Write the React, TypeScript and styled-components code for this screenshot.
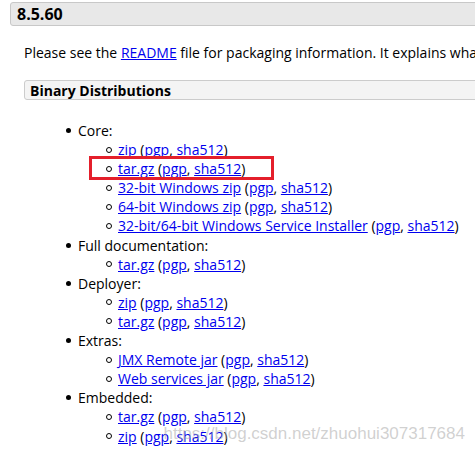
import React from "react";
import styled, { createGlobalStyle, css } from "styled-components";

const GlobalStyle = createGlobalStyle`
  html, body {
    margin: 0;
    padding: 0;
    background: #fff;
    overflow: hidden;
  }
  body {
    font-family: "Open Sans", "DejaVu Sans", sans-serif;
    font-size: 14px;
    color: #000;
  }
`;

const Page = styled.div`
  position: relative;
  width: 475px;
  height: 453px;
  overflow: hidden;
  padding: 2px 0 0 10px;
  box-sizing: border-box;
`;

const VersionBar = styled.h3`
  margin: 0 -20px 0 0;
  height: 24px;
  box-sizing: border-box;
  padding: 0 6px;
  display: flex;
  align-items: center;
  background: #e8e8e8;
  border: 1px solid #c8c8c8;
  border-radius: 3px;
  font-size: 16px;
  font-weight: 700;
`;

const Body = styled.div`
  padding-left: 14px;
`;

const Para = styled.p`
  margin: 17px 0 0;
  line-height: 19px;
  white-space: nowrap;
`;

const Link = styled.a`
  color: #0000ee;
  text-decoration: underline;
`;

const SubHeader = styled.h4`
  margin: 18px -20px 0 0;
  height: 20px;
  box-sizing: border-box;
  padding: 0 5px;
  display: flex;
  align-items: center;
  background: #f4f4f4;
  border: 1px solid #cccccc;
  border-radius: 3px;
  font-size: 14px;
  font-weight: 700;
`;

const List = styled.ul`
  list-style: none;
  margin: 21px 0 0;
  padding: 0 0 0 40px;
`;

const Item = styled.li`
  position: relative;
  padding-left: 14px;
  line-height: 19.1px;
  &::before {
    content: "";
    position: absolute;
    left: 2px;
    top: 7px;
    width: 5px;
    height: 5px;
    border-radius: 50%;
    background: #000;
  }
`;

const SubList = styled.ul`
  list-style: none;
  margin: 0;
  padding: 0 0 0 26px;
`;

const SubItem = styled.li<{ $marked?: boolean }>`
  position: relative;
  padding-left: 14px;
  line-height: 19.1px;
  white-space: nowrap;
  &::before {
    content: "";
    position: absolute;
    left: 2px;
    top: 6.5px;
    width: 6px;
    height: 6px;
    box-sizing: border-box;
    border-radius: 50%;
    border: 1px solid #000;
  }
  ${(p) =>
    p.$marked &&
    css`
      &::after {
        content: "";
        position: absolute;
        left: -15px;
        top: -3px;
        width: 185px;
        height: 24px;
        box-sizing: border-box;
        border: 3px solid #e41f2b;
      }
    `}
`;

const Watermark = styled.div`
  position: absolute;
  right: 10px;
  top: 424px;
  font-family: "Liberation Sans", Arial, sans-serif;
  font-size: 17px;
  color: rgba(170, 170, 170, 0.55);
  white-space: nowrap;
  pointer-events: none;
`;

type Download = { label: string; marked?: boolean };

const groups: { title: string; items: Download[] }[] = [
  {
    title: "Core:",
    items: [
      { label: "zip" },
      { label: "tar.gz", marked: true },
      { label: "32-bit Windows zip" },
      { label: "64-bit Windows zip" },
      { label: "32-bit/64-bit Windows Service Installer" },
    ],
  },
  { title: "Full documentation:", items: [{ label: "tar.gz" }] },
  { title: "Deployer:", items: [{ label: "zip" }, { label: "tar.gz" }] },
  {
    title: "Extras:",
    items: [{ label: "JMX Remote jar" }, { label: "Web services jar" }],
  },
  { title: "Embedded:", items: [{ label: "tar.gz" }, { label: "zip" }] },
];

export default function App() {
  return (
    <>
      <GlobalStyle />
      <Page>
        <VersionBar>8.5.60</VersionBar>
        <Body>
          <Para>
            Please see the <Link href="#">README</Link> file for packaging
            information. It explains what every distribution contains.
          </Para>
          <SubHeader>Binary Distributions</SubHeader>
          <List>
            {groups.map((g) => (
              <Item key={g.title}>
                {g.title}
                <SubList>
                  {g.items.map((d, i) => (
                    <SubItem key={i} $marked={d.marked}>
                      <Link href="#">{d.label}</Link> (<Link href="#">pgp</Link>,{" "}
                      <Link href="#">sha512</Link>)
                    </SubItem>
                  ))}
                </SubList>
              </Item>
            ))}
          </List>
        </Body>
        <Watermark>https://blog.csdn.net/zhuohui307317684</Watermark>
      </Page>
    </>
  );
}
